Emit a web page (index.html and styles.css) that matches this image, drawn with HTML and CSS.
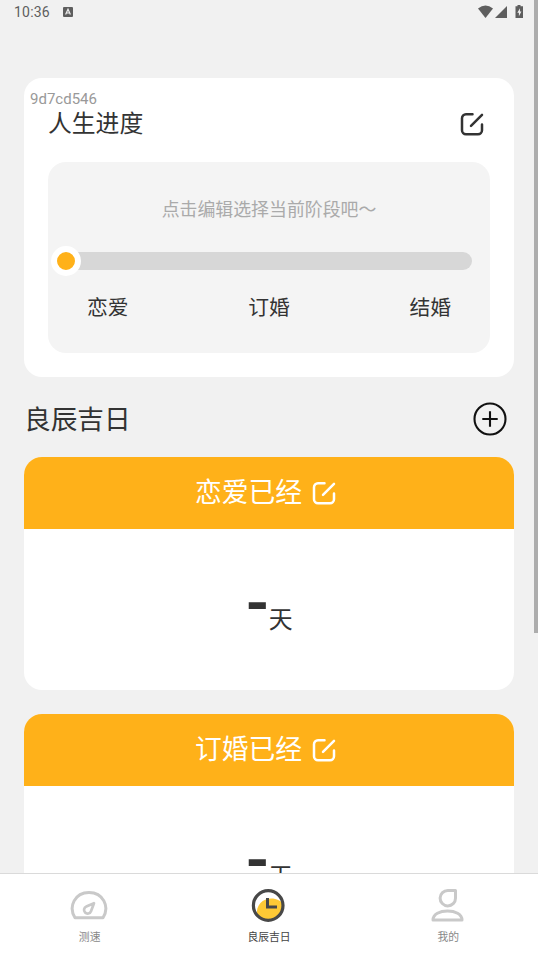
FILE: index.html
```html
<!DOCTYPE html>
<html lang="zh-CN">
<head>
<meta charset="utf-8">
<title>良辰吉日</title>
<link rel="stylesheet" href="styles.css">
</head>
<body>
<svg class="defs" width="0" height="0">
  <symbol id="edit" viewBox="0 0 24 24">
    <path d="M12.500 2.300H6a4 4 0 0 0-4 4v12a4 4 0 0 0 4 4h12a4 4 0 0 0 4-4v-5.800M11 13.800L22 2.800" fill="none" stroke="currentColor" stroke-width="2.5" stroke-linecap="round"/>
  </symbol>
</svg>
<div class="screen">
  <header class="status">
    <span class="time">10:36</span>
    <svg class="app" width="10" height="10" viewBox="0 0 10 10"><rect width="10" height="10" rx="1" fill="#5e5e5e"/><path d="M2.6 7.6L5 2.2l2.4 5.4M3.6 6h2.8" fill="none" stroke="#eee" stroke-width="1.2"/></svg>
    <svg class="signals" width="46" height="14" viewBox="0 0 46 14" fill="#5e5e5e">
      <path d="M0 3.6Q7.500-2.400 15 3.600L7.500 13z"/>
      <path d="M29 1v12H17z"/>
      <path d="M39.500 0h3v1.300H45V13h-7.500V1.300h2z"/>
      <path d="M42 3.200L39.300 7.700h1.600v3.500l2.500-4.700h-1.500z" fill="#f1f1f1"/>
    </svg>
  </header>

  <main class="content">
    <section class="card progress">
      <span class="uid">9d7cd546</span>
      <div class="progress-head">
        <h2>人生进度</h2>
        <svg class="edit" width="24" height="24"><use href="#edit"/></svg>
      </div>
      <div class="stage">
        <p class="hint">点击编辑选择当前阶段吧～</p>
        <div class="track"><span class="knob"></span></div>
        <div class="steps"><span>恋爱</span><span>订婚</span><span>结婚</span></div>
      </div>
    </section>

    <div class="section-head">
      <h1>良辰吉日</h1>
      <svg width="34" height="34" viewBox="0 0 34 34" fill="none" stroke="#111" stroke-width="2.1"><circle cx="17" cy="17" r="15.500"/><path d="M17 9.300v15.400M9.300 17h15.400"/></svg>
    </div>

    <section class="card day">
      <div class="day-head"><span>恋爱已经</span><svg width="24" height="24"><use href="#edit"/></svg></div>
      <div class="day-body"><b>-</b><span>天</span></div>
    </section>
    <section class="card day">
      <div class="day-head"><span>订婚已经</span><svg width="24" height="24"><use href="#edit"/></svg></div>
      <div class="day-body"><b>-</b><span>天</span></div>
    </section>
  </main>

  <nav class="tabs">
    <a class="tab">
      <svg width="40" height="36" viewBox="0 0 40 36" fill="none" stroke="#c9c9c9" stroke-width="3" stroke-linejoin="round">
        <path d="M5 30.800C-2 19.500 5 5.500 19 5.500S40 19.500 33 30.800z"/>
        <path d="M24 16.200L16.300 19.600a3.600 3.600 0 1 0 4.700 4.600z" stroke-width="2.700"/>
      </svg>
      <span>测速</span>
    </a>
    <a class="tab active">
      <svg width="40" height="36" viewBox="0 0 40 36" fill="none">
        <path d="M8 28C6.500 18 14 11.500 22 11.500c6 0 10 2.500 13 6C35 27 28 33 20 33c-5 0-9-2-12-5z" fill="#fec935"/>
        <circle cx="19.200" cy="18.500" r="14.800" stroke="#484848" stroke-width="3.200"/>
        <path d="M18.500 11v9H28" stroke="#484848" stroke-width="3"/>
      </svg>
      <span>良辰吉日</span>
    </a>
    <a class="tab">
      <svg width="40" height="36" viewBox="0 0 40 36" fill="none" stroke="#c9c9c9" stroke-width="3" stroke-linejoin="round">
        <path d="M27.500 3.500H20A7.700 7.700 0 1 0 27.500 11.200z"/>
        <path d="M5 33C5 27 12 24 19.500 24S34 27 34 33z"/>
      </svg>
      <span>我的</span>
    </a>
  </nav>
  <div class="scrollbar"></div>
</div>
</body>
</html>
```
FILE: styles.css
```css
* { box-sizing: border-box; }
body {
  margin: 0;
  background: #f1f1f1;
  color: #333;
  font-family: Roboto, "Noto Sans CJK SC", sans-serif;
}
h1, h2, p { margin: 0; font-weight: 400; }
svg { display: block; flex: none; }
.defs { position: absolute; }

.screen {
  position: relative;
  display: flex;
  flex-direction: column;
  height: 958px;
  overflow: hidden;
}

.status {
  display: flex;
  align-items: center;
  flex: none;
  height: 24px;
  padding: 0 14px 0 14px;
  color: #5e5e5e;
}
.time { width: 49px; font-size: 14px; letter-spacing: 0.2px; }
.signals { margin-left: auto; }

.content {
  flex: 1;
  min-height: 0;
  overflow: hidden;
  padding: 54px 24px 0;
}
.card { border-radius: 18px; background: #fff; overflow: hidden; }

.progress { position: relative; height: 299px; padding: 28px 24px 24px; }
.uid {
  position: absolute;
  left: 6px;
  top: 12px;
  font-size: 15px;
  line-height: 18px;
  color: #999;
}
.progress-head {
  display: flex;
  align-items: center;
  justify-content: space-between;
  height: 36px;
  padding-right: 6px;
}
.progress-head h2 { font-size: 23.8px; line-height: 36px; }

.stage {
  height: 191px;
  margin-top: 20px;
  padding: 34px 18px 0 9px;
  border-radius: 18px;
  background: #f4f4f4;
}
.hint {
  padding-left: 9px;
  font-size: 17.9px;
  line-height: 27px;
  color: #aaa;
  text-align: center;
}
.track {
  display: flex;
  align-items: center;
  height: 18px;
  margin-top: 28.5px;
  border-radius: 9px;
  background: #d7d7d7;
}
.knob {
  width: 30px;
  height: 30px;
  margin-left: -6px;
  border: 6px solid #fff;
  border-radius: 50%;
  background: #ffb119;
}
.steps {
  display: flex;
  justify-content: space-between;
  margin-top: 22.5px;
  padding: 0 21px 0 30px;
  font-size: 20.8px;
  line-height: 32px;
}

.section-head {
  display: flex;
  align-items: center;
  justify-content: space-between;
  height: 80px;
  padding: 4px 7px 0 0;
}
.section-head h1 { padding-top: 1px; font-size: 26.7px; line-height: 40px; }

.day { height: 233px; margin-bottom: 24px; }
.day-head {
  display: flex;
  align-items: center;
  justify-content: center;
  gap: 10px;
  height: 72px;
  padding: 0 7px 1px 0;
  background: #ffb119;
  color: #fff;
  font-size: 26.8px;
  line-height: 40px;
}
.day-body {
  display: flex;
  align-items: flex-start;
  justify-content: center;
  height: 161px;
  padding-top: 42px;
}
.day-body b { margin-right: -1px; font-size: 62px; line-height: 64px; }
.day-body span { margin-top: 31px; font-size: 23.9px; line-height: 36px; }

.tabs {
  display: flex;
  flex: none;
  height: 85px;
  border-top: 1px solid #dadada;
  background: #fff;
}
.tab {
  display: flex;
  flex: 1;
  flex-direction: column;
  align-items: center;
  padding-top: 13px;
  font-size: 10.8px;
  line-height: 16px;
  color: #888;
}
.tab span { margin-top: 7px; }
.active { color: #444; }

.scrollbar {
  position: absolute;
  top: 0;
  right: 0;
  width: 4px;
  height: 633px;
  background: #adadad;
}
```
